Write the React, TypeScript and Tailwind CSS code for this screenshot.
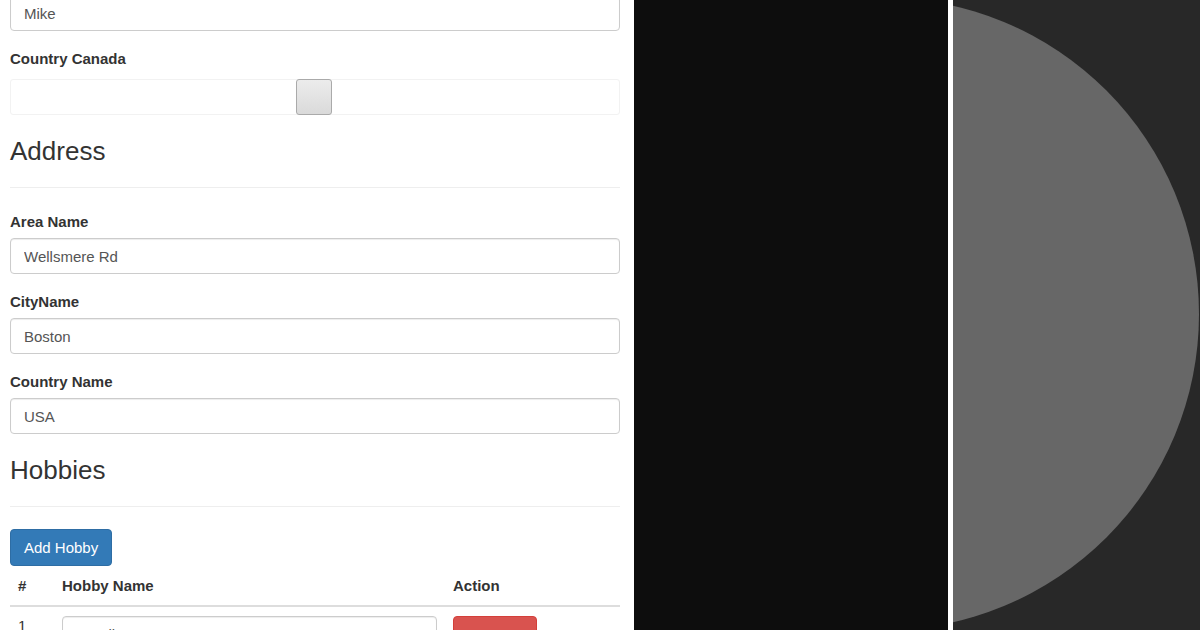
import React from "react";

const font = { fontFamily: '"Liberation Sans", Arial, Helvetica, sans-serif' };

function Field({ label, value }: { label: string; value: string }) {
  return (
    <div className="mt-[17px] first:mt-[23px]">
      <label className="block pt-[1px] text-[15px] font-bold leading-[20px] text-[#333]">
        {label}
      </label>
      <input
        readOnly
        value={value}
        className="mt-[6px] block h-[36px] w-full rounded-[4px] border border-[#ccc] bg-white px-[13px] text-[15px] text-[#555] shadow-[inset_0_1px_1px_rgba(0,0,0,0.075)] outline-none"
      />
    </div>
  );
}

function SectionTitle({ children }: { children: React.ReactNode }) {
  return (
    <h3 className="mt-[22px] border-b border-[#eee] pb-[22px] text-[26px] font-medium leading-[28px] text-[#333]">
      {children}
    </h3>
  );
}

function PersonForm() {
  return (
    <div className="h-[630px] w-[634px] shrink-0 overflow-hidden bg-white pl-[10px] pr-[14px]" style={font}>
      <input
        readOnly
        value="Mike"
        className="-mt-[5px] block h-[36px] w-full rounded-[4px] border border-[#ccc] bg-white px-[13px] text-[15px] text-[#555] shadow-[inset_0_1px_1px_rgba(0,0,0,0.075)] outline-none"
      />

      <label className="mt-[17px] block pt-[1px] text-[15px] font-bold leading-[20px] text-[#333]">
        Country Canada
      </label>
      <div className="relative mt-[10px] h-[36px] rounded-[3px] border border-[#f2f2f2] bg-white">
        <span className="absolute -top-px left-[285px] h-[36px] w-[36px] rounded-[3px] border border-[#aaa] bg-gradient-to-b from-[#ececec] to-[#dadada]" />
      </div>

      <SectionTitle>Address</SectionTitle>
      <div>
        <Field label="Area Name" value="Wellsmere Rd" />
        <Field label="CityName" value="Boston" />
        <Field label="Country Name" value="USA" />
      </div>

      <SectionTitle>Hobbies</SectionTitle>
      <button className="mt-[22px] h-[37px] rounded-[4px] border border-[#2e6da4] bg-[#337ab7] px-[13px] text-[15px] leading-[20px] text-white">
        Add Hobby
      </button>

      <table className="mt-[1px] w-full table-fixed border-collapse text-[15px] text-[#333]">
        <colgroup>
          <col className="w-[44px]" />
          <col className="w-[391px]" />
          <col />
        </colgroup>
        <thead>
          <tr className="border-b-2 border-[#ddd]">
            <th className="px-[8px] py-[8px] text-left font-bold leading-[22px]">#</th>
            <th className="px-[8px] py-[8px] text-left font-bold leading-[22px]">Hobby Name</th>
            <th className="px-[8px] py-[8px] text-left font-bold leading-[22px]">Action</th>
          </tr>
        </thead>
        <tbody>
          <tr>
            <td className="px-[8px] pt-[8px] align-top leading-[22px]">1</td>
            <td className="px-[8px] pt-[9px] align-top">
              <input
                readOnly
                value="Reading"
                className="block h-[36px] w-full rounded-[4px] border border-[#ccc] bg-white px-[13px] text-[15px] text-[#555] shadow-[inset_0_1px_1px_rgba(0,0,0,0.075)] outline-none"
              />
            </td>
            <td className="px-[8px] pt-[9px] align-top">
              <button className="h-[37px] rounded-[4px] border border-[#d43f3a] bg-[#d9534f] px-[13px] text-[15px] leading-[20px] text-white">
                Remove
              </button>
            </td>
          </tr>
        </tbody>
      </table>
    </div>
  );
}

export default function App() {
  return (
    <div className="flex h-[630px] w-[1200px] overflow-hidden">
      <PersonForm />
      <div className="w-[314px] shrink-0 bg-[#0d0d0d]" />
      <div className="w-[5px] shrink-0 bg-white" />
      <div className="flex-1 bg-[#282828]">
        <svg width="247" height="630" viewBox="0 0 247 630" className="block">
          <circle cx="-70" cy="314" r="316" fill="#676767" />
        </svg>
      </div>
    </div>
  );
}
